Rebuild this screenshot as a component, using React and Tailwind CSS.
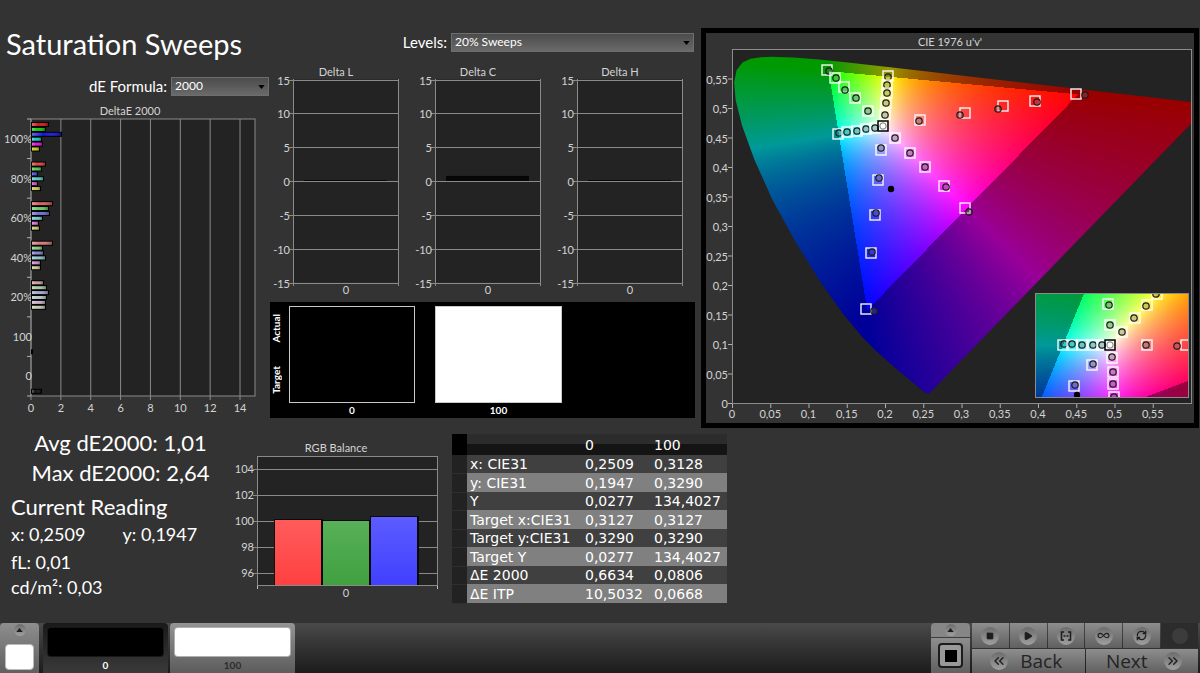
import React, { useLayoutEffect, useRef } from "react";
import {
  ChevronsLeft,
  ChevronsRight,
  Infinity as InfinityIcon,
  Play,
  RefreshCw,
  Square,
} from "lucide-react";

const AXIS = "#8a8a8a";
const PLOT_BG = "#232323";

// ---------- data ----------

const deltaEGroups = [
  {
    label: "100%",
    bars: [
      [17, "#d41414"],
      [14, "#14c814"],
      [30, "#1414d8"],
      [10, "#14c8c8"],
      [11, "#d414d4"],
      [8, "#c8c814"],
    ],
  },
  {
    label: "80%",
    bars: [
      [14, "#d84444"],
      [10, "#4cc84c"],
      [6, "#4c4cd8"],
      [12, "#54c8c8"],
      [6, "#d44cd4"],
      [9, "#c8c84c"],
    ],
  },
  {
    label: "60%",
    bars: [
      [21, "#d85c5c"],
      [17, "#64cc64"],
      [18, "#6c6cd8"],
      [11, "#74c8c4"],
      [7, "#d070d0"],
      [8, "#c8c870"],
    ],
  },
  {
    label: "40%",
    bars: [
      [21, "#d87878"],
      [11, "#84cc84"],
      [12, "#8484d4"],
      [14, "#90c4c8"],
      [9, "#d08cd0"],
      [9, "#c8c88c"],
    ],
  },
  {
    label: "20%",
    bars: [
      [12, "#d09c9c"],
      [15, "#a4c8a4"],
      [17, "#a4a4cc"],
      [15, "#b0c8c4"],
      [14, "#ccb0cc"],
      [14, "#c8c8ac"],
    ],
  },
  { label: "100", bars: [null, null, null, null, null, null, [1, "#101010"]] },
  { label: "0", bars: [null, null, null, null, null, null, [10, "#101010"]] },
];

const deltaCharts = [
  { title: "Delta L", value: 0.15 },
  { title: "Delta C", value: 0.75 },
  { title: "Delta H", value: 0.15 },
];

const rgbBars = [
  { x: 45, top: 80, id: "rgbRed", from: "#ff5c5c", to: "#ff4040" },
  { x: 93, top: 81, id: "rgbGreen", from: "#58b058", to: "#40a040" },
  { x: 141, top: 77, id: "rgbBlue", from: "#5c5cff", to: "#4040ff" },
];

const tableRows = [
  ["x: CIE31", "0,2509", "0,3128"],
  ["y: CIE31", "0,1947", "0,3290"],
  ["Y", "0,0277", "134,4027"],
  ["Target x:CIE31", "0,3127", "0,3127"],
  ["Target y:CIE31", "0,3290", "0,3290"],
  ["Target Y", "0,0277", "134,4027"],
  ["ΔE 2000", "0,6634", "0,0806"],
  ["ΔE ITP", "10,5032", "0,0668"],
];

// [target x, target y, measured x, measured y], relative to the plot
const uvMarkers = [
  [95, 20, 97, 21],
  [103, 28, 104, 28],
  [112, 37, 113, 40],
  [123, 48, 124, 48],
  [136, 61, 136, 61],
  [156, 26, 156, 27],
  [155, 35, 155, 35],
  [155, 43, 155, 43],
  [154, 53, 154, 53],
  [153, 65, 153, 65],
  [106, 84, 107, 83],
  [115, 82, 115, 82],
  [125, 81, 125, 81],
  [134, 79, 134, 79],
  [143, 78, 143, 78],
  [163, 88, 163, 88],
  [178, 103, 178, 103],
  [193, 117, 193, 117],
  [212, 136, 214, 137],
  [233, 158, 237, 162],
  [149, 100, 149, 98],
  [146, 130, 147, 128],
  [143, 165, 144, 163],
  [139, 203, 140, 202],
  [134, 259, 142, 261],
  [188, 70, 187, 71],
  [233, 63, 228, 65],
  [271, 56, 266, 59],
  [303, 51, 305, 52],
  [344, 44, 353, 45],
];

const xyMarkers = [
  [72, 10, 73, 11],
  [74, 31, 74, 31],
  [121, 0, 120, 0],
  [111, 11, 110, 12],
  [99, 24, 98, 24],
  [86, 38, 86, 38],
  [27, 51, 28, 50],
  [36, 51, 36, 50],
  [46, 51, 46, 51],
  [57, 51, 57, 51],
  [66, 51, 66, 51],
  [111, 51, 110, 51],
  [150, 51, 141, 52],
  [76, 64, 76, 63],
  [77, 78, 77, 78],
  [77, 90, 77, 90],
  [78, 103, 78, 103],
  [56, 71, 57, 70],
  [38, 92, 39, 91],
];

// spectral locus, CIE 1931 x,y
const locus = [
  [0.1741, 0.005], [0.1714, 0.0051], [0.1689, 0.0069], [0.1644, 0.0109],
  [0.1566, 0.0177], [0.144, 0.0297], [0.1355, 0.0399], [0.1241, 0.0578],
  [0.1096, 0.0868], [0.0913, 0.1327], [0.0687, 0.2007], [0.0454, 0.295],
  [0.0235, 0.4127], [0.0082, 0.5384], [0.0039, 0.6548], [0.0139, 0.7502],
  [0.0389, 0.812], [0.0743, 0.8338], [0.1142, 0.8262], [0.1547, 0.8059],
  [0.2296, 0.7543], [0.3016, 0.6923], [0.3731, 0.6245], [0.4441, 0.5547],
  [0.5125, 0.4866], [0.5752, 0.4242], [0.627, 0.3725], [0.6915, 0.3083],
  [0.7347, 0.2653],
];

// ---------- colour maths ----------

const xyToUv = ([x, y]) => {
  const d = -2 * x + 12 * y + 3;
  return [(4 * x) / d, (9 * y) / d];
};

const uvToXy = (u, v) => {
  const d = 6 * u - 16 * v + 12;
  return [(9 * u) / d, (4 * v) / d];
};

function xyToRgb(x, y) {
  const X = x / y;
  const Z = (1 - x - y) / y;
  const lin = [
    3.2406 * X - 1.5372 - 0.4986 * Z,
    -0.9689 * X + 1.8758 + 0.0415 * Z,
    0.0557 * X - 0.204 + 1.057 * Z,
  ];
  const max = Math.max(...lin);
  const level = Math.min(...lin) < -0.0005 * max ? 153 : 255;
  return lin.map((c) => level * Math.pow(Math.max(c, 0) / max, 0.85));
}

function paintField(ctx, width, height, toXy) {
  const image = ctx.createImageData(width, height);
  for (let py = 0; py < height; py++) {
    for (let px = 0; px < width; px++) {
      const [x, y] = toXy(px + 0.5, py + 0.5);
      const [r, g, b] = xyToRgb(x, Math.max(y, 0.0001));
      image.data.set([r, g, b, 255], (py * width + px) * 4);
    }
  }
  ctx.putImageData(image, 0, 0);
}

function ColorField({ width, height, toXy, outline }) {
  const ref = useRef(null);

  useLayoutEffect(() => {
    const ctx = ref.current.getContext("2d");
    ctx.globalCompositeOperation = "source-over";
    paintField(ctx, width, height, toXy);
    if (outline) {
      ctx.globalCompositeOperation = "destination-in";
      ctx.beginPath();
      outline.forEach(([x, y]) => ctx.lineTo(x, y));
      ctx.closePath();
      ctx.fill();
    }
  }, [width, height, toXy, outline]);

  return <canvas ref={ref} width={width} height={height} className="block" />;
}

const uvPlotToXy = (px, py) => uvToXy(px / 765, (353 - py) / 590);
const xyPlotToXy = (px, py) => [
  0.3127 + (px - 74) / 534,
  0.329 - (py - 51) / 363,
];
const uvOutline = locus.map(xyToUv).map(([u, v]) => [u * 765, 353 - v * 590]);

// ---------- charts ----------

function Label({ x, y, anchor = "middle", children }) {
  return (
    <text x={x} y={y} textAnchor={anchor} fontSize="11" fill="#d4d4d4">
      {children}
    </text>
  );
}

function DeltaEChart() {
  const step = 277 / 7;
  return (
    <svg viewBox="0 0 270 316" className="block w-full h-auto">
      <defs>
        <linearGradient id="gloss" x1="0" y1="0" x2="1" y2="0">
          <stop offset="0" stopColor="#fff" stopOpacity="0.35" />
          <stop offset="0.4" stopColor="#fff" stopOpacity="0" />
          <stop offset="1" stopColor="#000" stopOpacity="0.35" />
        </linearGradient>
      </defs>
      <Label x={130} y={13}>DeltaE 2000</Label>
      <rect x="31" y="17" width="224" height="277" fill={PLOT_BG} stroke={AXIS} />
      {[0, 2, 4, 6, 8, 10, 12, 14].map((n) => (
        <g key={n}>
          <path d={`M${31 + n * 14.93} 17V298`} stroke={AXIS} />
          <Label x={31 + n * 14.93} y={310}>{n}</Label>
        </g>
      ))}
      {deltaEGroups.map((group, i) => (
        <g key={group.label}>
          <path d={`M27 ${17 + i * step}H31`} stroke="#b0b0b0" />
          <Label x={32} y={41 + i * step} anchor="end">{group.label}</Label>
          {group.bars.map((bar, j) =>
            bar ? (
              <g key={j}>
                <rect x="31" y={20 + i * step + j * 4.9} width={bar[0] + 1} height="5" fill="#000" />
                <rect x="32" y={21 + i * step + j * 4.9} width={bar[0] - 1} height="3" fill={bar[1]} />
                <rect x="32" y={21 + i * step + j * 4.9} width={bar[0] - 1} height="3" fill="url(#gloss)" />
              </g>
            ) : null
          )}
        </g>
      ))}
      <path d="M27 294H31" stroke="#b0b0b0" />
    </svg>
  );
}

function DeltaChart({ title, value }) {
  const scale = 203 / 30;
  return (
    <svg viewBox="0 0 142 235" className="block min-w-0 flex-1 h-auto">
      <Label x={66} y={12}>{title}</Label>
      <rect x="23.5" y="15.5" width="105" height="203" fill={PLOT_BG} />
      {[15, 10, 5, 0, -5, -10, -15].map((n) => {
        const y = Math.round(117 - n * scale) + 0.5;
        return (
          <g key={n}>
            <path d={`M19 ${y}H128`} stroke={AXIS} />
            <Label x={20} y={y + 4} anchor="end">{n}</Label>
          </g>
        );
      })}
      <rect x="34" y={117 - value * scale} width="83" height={value * scale} fill="#060606" />
      <path d="M23.5 15V222M128.5 15V222" stroke={AXIS} />
      <Label x={76} y={230}>0</Label>
    </svg>
  );
}

function RgbBalanceChart() {
  return (
    <svg viewBox="0 0 215 162" className="block w-full h-auto">
      <Label x={106} y={12}>RGB Balance</Label>
      <rect x="27.5" y="16.5" width="180" height="129" fill={PLOT_BG} stroke={AXIS} />
      {[104, 102, 100, 98, 96].map((n, i) => (
        <g key={n}>
          <path d={`M23 ${29.5 + i * 26}H207`} stroke={AXIS} />
          <Label x={24} y={33 + i * 26} anchor="end">{n}</Label>
        </g>
      ))}
      {rgbBars.map((bar) => (
        <g key={bar.id}>
          <linearGradient id={bar.id} x1="0" y1="0" x2="0" y2="1">
            <stop offset="0" stopColor={bar.from} />
            <stop offset="1" stopColor={bar.to} />
          </linearGradient>
          <rect x={bar.x - 1} y={bar.top - 1} width="49" height={146 - bar.top} fill="#0a0a0a" />
          <rect x={bar.x} y={bar.top} width="46" height={145 - bar.top} fill={`url(#${bar.id})`} />
        </g>
      ))}
      <path d="M27.5 145V149M207.5 145V149" stroke="#c0c0c0" />
      <path d="M27 145.500H208" stroke={AXIS} />
      <Label x={116} y={157}>0</Label>
    </svg>
  );
}

function Markers({ points, white, extra }) {
  return (
    <>
      {points.map(([tx, ty, mx, my], i) => (
        <g key={i} fill="none">
          <rect x={tx - 5} y={ty - 5} width="10" height="10" stroke="#fff" strokeOpacity="0.95" strokeWidth="1.4" />
          <circle cx={mx} cy={my} r="3.2" fill="#666" fillOpacity="0.35" stroke="#1c1c1c" strokeWidth="1.2" />
        </g>
      ))}
      <rect x={white[0] - 5} y={white[1] - 5} width="10" height="10" fill="none" stroke="#000" strokeWidth="1.5" />
      <circle cx={white[0]} cy={white[1]} r="3.2" fill="#fff" stroke="#777" />
      <circle cx={extra[0]} cy={extra[1]} r="3.2" fill="#000" />
    </>
  );
}

function CieChart() {
  const uTicks = ["0", "0,05", "0,1", "0,15", "0,2", "0,25", "0,3", "0,35", "0,4", "0,45", "0,5", "0,55"];
  return (
    <svg viewBox="0 0 488 390" className="block w-full h-auto">
      <clipPath id="insetClip">
        <rect width="152" height="104" />
      </clipPath>
      <Label x={244} y={13}>CIE 1976 u'v'</Label>
      <rect x="26.5" y="16.5" width="459" height="354" fill={PLOT_BG} stroke="#8c8c8c" />
      {uTicks.map((t, i) => (
        <g key={t}>
          <path d={`M${26.5 + i * 38.25} 371V375`} stroke="#b0b0b0" />
          <Label x={26 + i * 38.25} y={385}>{t}</Label>
          <path d={`M22 ${370.5 - i * 29.5}H26`} stroke="#b0b0b0" />
          <Label x={22} y={375 - i * 29.5} anchor="end">{t}</Label>
        </g>
      ))}
      <g transform="translate(26 17)">
        <foreignObject x="1" y="0" width="458" height="353">
          <ColorField width={458} height={353} toXy={uvPlotToXy} outline={uvOutline} />
        </foreignObject>
        <Markers points={uvMarkers} white={[151, 76]} extra={[159, 139]} />
      </g>
      <g transform="translate(330 261)">
        <foreignObject width="152" height="104">
          <ColorField width={152} height={104} toXy={xyPlotToXy} />
        </foreignObject>
        <g clipPath="url(#insetClip)">
          <Markers points={xyMarkers} white={[74, 51]} extra={[41, 101]} />
        </g>
        <rect x="-0.5" y="-0.5" width="153" height="104" fill="none" stroke="#8c8c8c" />
      </g>
    </svg>
  );
}

// ---------- controls ----------

function Dropdown({ id, value, className }) {
  return (
    <div className={`relative ${className}`}>
      <select
        id={id}
        defaultValue={value}
        className="block h-[19px] w-full appearance-none border border-[#6e6e6e] bg-linear-to-b from-[#4c4c4c] to-[#6a6a6a] px-[3px] text-[12px] leading-4 text-white"
      >
        <option>{value}</option>
      </select>
      <svg viewBox="0 0 8 5" className="pointer-events-none absolute right-1 top-2 h-[4px] w-[7px]">
        <path d="M0 0H8L4 5Z" fill="#000" />
      </svg>
    </div>
  );
}

function Swatch({ label, color, active }) {
  return (
    <button
      type="button"
      className={`flex h-full w-[125px] flex-col rounded-t-sm px-1 pt-1 text-[10px] font-bold leading-4 ${
        active
          ? "bg-linear-to-b from-[#1a1a1a] to-[#3a3a3a] text-white"
          : "bg-linear-to-b from-[#949494] to-[#5c5c5c] text-[#2c2c2c]"
      }`}
    >
      <span className={`block h-[31px] w-full rounded-sm border border-[#3a3a3a]/40 ${color}`} />
      <span className="block w-full text-center">{label}</span>
    </button>
  );
}

function RoundIcon({ children, small }) {
  return (
    <span
      className={`flex items-center justify-center rounded-full bg-linear-to-b from-[#6c6c6c] to-[#a0a0a0] text-[#1e1e1e] ${
        small ? "size-3" : "size-[18px]"
      }`}
    >
      {children}
    </span>
  );
}

function UpArrow() {
  return (
    <RoundIcon small>
      <svg viewBox="0 0 8 5" className="h-[4px] w-[7px]">
        <path d="M0 5L4 0L8 5Z" fill="currentColor" />
      </svg>
    </RoundIcon>
  );
}

const transport = [
  { name: "Stop", icon: <Square size={8} fill="currentColor" /> },
  { name: "Play", icon: <Play size={10} fill="currentColor" /> },
  {
    name: "Range",
    icon: (
      <svg viewBox="0 0 12 10" className="h-[10px] w-3" fill="none" stroke="currentColor" strokeWidth="1.6">
        <path d="M4 1H1.500V9H4M8 1H10.500V9H8M3.500 5H5M5.500 5H6.500M7 5H8.500" />
      </svg>
    ),
  },
  { name: "Loop", icon: <InfinityIcon size={13} /> },
  { name: "Refresh", icon: <RefreshCw size={11} strokeWidth={3} /> },
];

const metal = "bg-linear-to-b from-[#8e8e8e] to-[#606060]";

function Footer() {
  return (
    <footer className="flex h-[50px] justify-between bg-linear-to-b from-[#4a4a4a] to-[#1c1c1c] pr-[2px]">
      <div className="flex">
        <button type="button" aria-label="Pattern" className={`mr-1 flex w-[39px] flex-col items-center gap-2 rounded-t-sm pt-px ${metal}`}>
          <UpArrow />
          <span className="h-[26px] w-[29px] shrink-0 rounded-sm border border-[#bbb] bg-white" />
        </button>
        <div className="flex gap-[2px]">
          <Swatch label="0" color="bg-black" active />
          <Swatch label="100" color="bg-white" />
        </div>
      </div>
      <div className="flex gap-[2px]">
        <div className="flex w-[39px] flex-col">
          <button type="button" aria-label="Expand" className="flex h-[15px] items-center justify-center rounded-t-sm border-b border-[#3c3c3c] bg-[#868686]">
            <UpArrow />
          </button>
          <button type="button" aria-label="Window" className={`flex flex-1 items-center justify-center ${metal}`}>
            <span className="flex size-[25px] items-center justify-center rounded-sm border-2 border-[#1c1c1c] bg-[#999]">
              <span className="size-3 bg-black" />
            </span>
          </button>
        </div>
        <div className="flex w-[226px] flex-col gap-px">
          <div className="grid h-[25px] grid-cols-6 gap-px">
            {transport.map((item) => (
              <button key={item.name} type="button" aria-label={item.name} className={`flex items-center justify-center ${metal}`}>
                <RoundIcon>{item.icon}</RoundIcon>
              </button>
            ))}
            <div className="flex items-center justify-center bg-[#2c2c2c]">
              <span className="size-4 rounded-full bg-[#3c3c3c]" />
            </div>
          </div>
          <div className="grid flex-1 grid-cols-2 gap-px font-['Open_Sans',sans-serif] text-[19px] font-medium leading-6 text-[#242424]">
            <button type="button" className={`flex items-center justify-center gap-3 pr-1 ${metal}`}>
              <RoundIcon><ChevronsLeft size={16} /></RoundIcon>
              Back
            </button>
            <button type="button" className={`flex items-center justify-center gap-4 pl-1 ${metal}`}>
              Next
              <RoundIcon><ChevronsRight size={16} /></RoundIcon>
            </button>
          </div>
        </div>
      </div>
    </footer>
  );
}

// ---------- panels ----------

function ComparePanel() {
  return (
    <div className="mr-[5px] mt-[3px] grid h-[116px] grid-cols-[19fr_126fr_20fr_127fr_133fr] bg-black pt-1 text-[10px] font-bold leading-3 text-white">
      <div className="flex h-24 flex-col items-start justify-between py-2">
        <span className="rotate-180 [writing-mode:vertical-rl]">Actual</span>
        <span className="rotate-180 [writing-mode:vertical-rl]">Target</span>
      </div>
      <div className="text-center">
        <div className="mb-px h-[97px] border border-[#c8c8c8] bg-black" />
        0
      </div>
      <div />
      <div className="text-center">
        <div className="mb-px h-[97px] border border-[#c8c8c8] bg-white" />
        100
      </div>
    </div>
  );
}

function ReadingsTable() {
  return (
    <table className="w-[275px] table-fixed border-collapse text-left font-['DejaVu_Sans',sans-serif] text-[14px] leading-[18px] text-white">
      <colgroup>
        <col className="w-[15px]" />
        <col className="w-[115px]" />
        <col className="w-[69px]" />
        <col className="w-[76px]" />
      </colgroup>
      <thead>
        <tr className="h-[21px] bg-linear-to-b from-[#2c2c2c] from-50% to-[#141414] to-50%">
          <td className="bg-black p-0" />
          <td className="p-0" />
          <th className="p-0 pl-[3px] font-normal">0</th>
          <th className="p-0 pl-[3px] font-normal">100</th>
        </tr>
      </thead>
      <tbody>
        {tableRows.map(([name, a, b], i) => (
          <tr key={name} className={i % 2 ? "h-[19px] bg-[#808080]" : "h-[18px] bg-[#404040]"}>
            <td className="border-b border-[#2e2e2e] bg-[#222] p-0" />
            <th className="whitespace-nowrap p-0 pl-[3px] font-normal">{name}</th>
            <td className="p-0 pl-[3px]">{a}</td>
            <td className="p-0 pl-[3px]">{b}</td>
          </tr>
        ))}
      </tbody>
    </table>
  );
}

export default function App() {
  return (
    <div className="flex min-h-screen flex-col bg-[#333] font-['Lato',sans-serif] text-white">
      <main className="flex-1">
        <div className="grid grid-cols-[270fr_430fr_500fr]">
          <section>
            <h1 className="pl-[6px] pt-6 text-[29px] leading-10">Saturation Sweeps</h1>
            <div className="flex items-center justify-end gap-1 pb-[6px] pr-px pt-3 text-[15px] leading-5">
              <label htmlFor="formula">dE Formula:</label>
              <Dropdown id="formula" value="2000" className="w-[98px]" />
            </div>
            <DeltaEChart />
          </section>

          <section>
            <div className="flex items-center justify-end gap-1 pb-3 pr-[6px] pt-8 text-[15px] leading-5">
              <label htmlFor="levels">Levels:</label>
              <Dropdown id="levels" value="20% Sweeps" className="w-[243px]" />
            </div>
            <div className="flex pr-1">
              {deltaCharts.map((chart) => (
                <DeltaChart key={chart.title} {...chart} />
              ))}
            </div>
            <ComparePanel />
          </section>

          <section className="mt-7 self-start border-[5px] border-black mx-px">
            <CieChart />
          </section>
        </div>

        <div className="flex items-start">
          <section className="w-[230px] shrink-0 pl-[11px]">
            <div className="text-center text-[22px] leading-[30px]">
              <div>Avg dE2000: 1,01</div>
              <div>Max dE2000: 2,64</div>
            </div>
            <h2 className="pt-1 text-[22px] leading-[30px]">Current Reading</h2>
            <div className="grid grid-cols-2 gap-x-1 text-[18px] leading-6">
              <span>x: 0,2509</span>
              <span>y: 0,1947</span>
            </div>
            <div className="pt-1 text-[18px] leading-[25px]">
              <div>fL: 0,01</div>
              <div>cd/m²: 0,03</div>
            </div>
          </section>
          <section className="w-[215px] shrink-0 pt-3">
            <RgbBalanceChart />
          </section>
          <section className="pl-[7px] pt-[6px]">
            <ReadingsTable />
          </section>
        </div>
      </main>
      <Footer />
    </div>
  );
}
